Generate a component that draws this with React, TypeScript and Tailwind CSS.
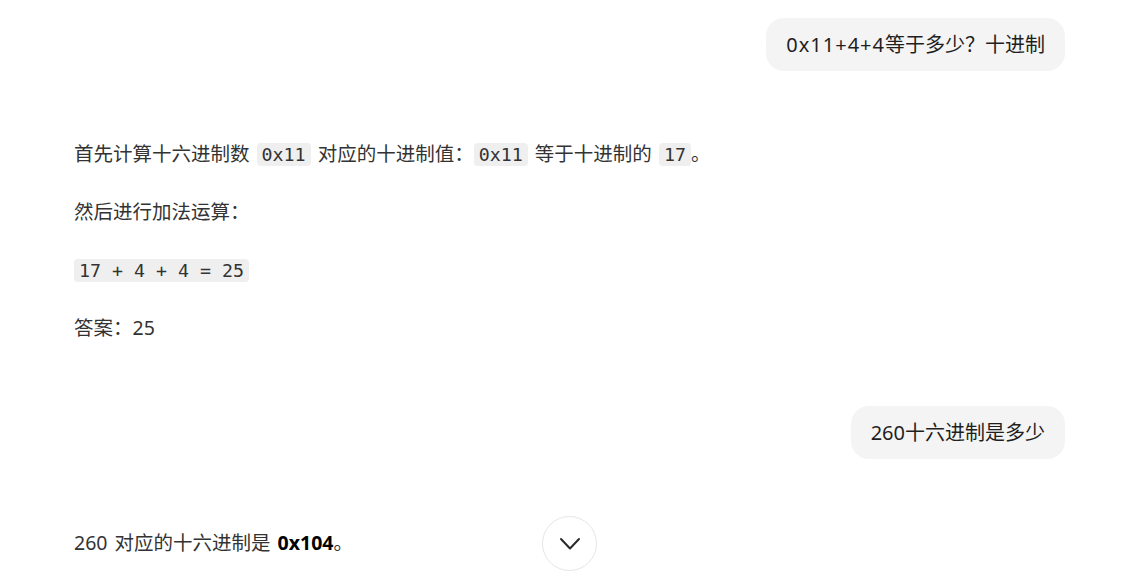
import React from "react";

const sans = '"Noto Sans", "Noto Sans CJK SC", sans-serif';
const mono = '"DejaVu Sans Mono", "Noto Sans CJK SC", monospace';

function Code({ children }: { children: React.ReactNode }) {
  return (
    <code
      className="rounded-[4px] bg-[#efefef] px-[5px] py-[1px] text-[18.3px] leading-[21px] text-[#333] [word-spacing:0px]"
      style={{ fontFamily: mono }}
    >
      {children}
    </code>
  );
}

function UserBubble({ children }: { children: React.ReactNode }) {
  return (
    <div className="flex justify-end">
      <div className="rounded-[18px] bg-[#f4f4f4] px-[20px] py-[12px] text-[20px] leading-[29px] text-[#1f1f1f]">
        {children}
      </div>
    </div>
  );
}

export default function App() {
  return (
    <div
      className="relative h-[574px] w-[1130px] overflow-hidden bg-white pl-[74px] pr-[65px] pt-[18px]"
      style={{ fontFamily: sans }}
    >
      <UserBubble>
        <span className="tracking-[1px]">0x11+4+4</span>等于多少？十进制
      </UserBubble>

      <div className="mt-[68px] flex flex-col gap-[29px] text-[19.5px] leading-[29px] text-[#333] [word-spacing:2px]">
        <p>
          首先计算十六进制数 <Code>0x11</Code> 对应的十进制值：<Code>0x11</Code> 等于十进制的{" "}
          <Code>17</Code>。
        </p>
        <p>然后进行加法运算：</p>
        <p>
          <Code>17 + 4 + 4 = 25</Code>
        </p>
        <p>答案：25</p>
      </div>

      <div className="mt-[64px]">
        <UserBubble>260十六进制是多少</UserBubble>
      </div>

      <div className="mt-[69px] text-[19.5px] leading-[29px] text-[#333] [word-spacing:2px]">
        <p>
          260 对应的十六进制是 <strong className="font-bold text-black">0x104</strong>。
        </p>
      </div>

      <button className="absolute left-[542px] top-[516px] flex h-[55px] w-[55px] items-center justify-center rounded-full border border-[#e6e6e6] bg-white">
        <svg width="22" height="14" viewBox="0 0 22 14" fill="none">
          <polyline
            points="2,2 11,11.5 20,2"
            stroke="#2a2a2a"
            strokeWidth="2"
            strokeLinecap="round"
            strokeLinejoin="round"
          />
        </svg>
      </button>
    </div>
  );
}
